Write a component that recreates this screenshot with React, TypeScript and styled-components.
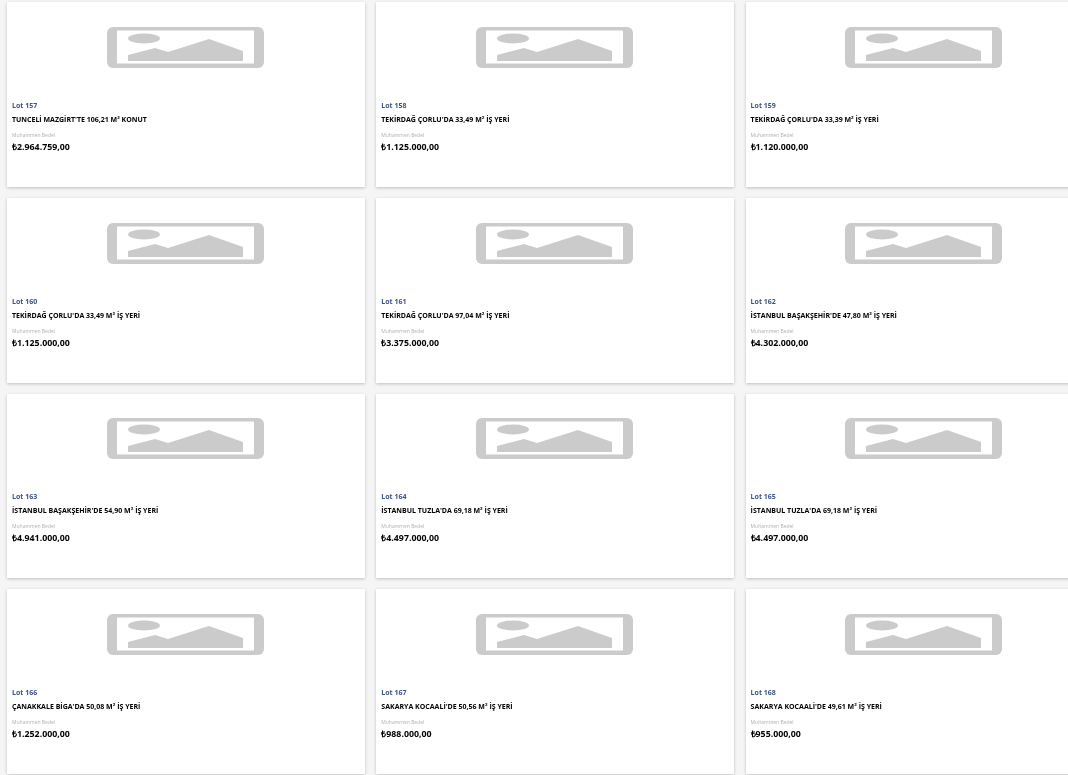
import React from "react";
import styled, { createGlobalStyle } from "styled-components";

const Global = createGlobalStyle`
  html, body { margin: 0; padding: 0; height: 775px; overflow: hidden; background: #f5f5f5; }
  body { font-family: "Open Sans", "Liberation Sans", sans-serif; }
`;

const Frame = styled.div`
  width: 1068px;
  height: 775px;
  overflow: hidden;
`;

const Grid = styled.main`
  display: grid;
  grid-template-columns: repeat(3, 357.5px);
  grid-auto-rows: 184.5px;
  column-gap: 11.8px;
  row-gap: 11.2px;
  padding: 2.4px 0 0 7px;
  width: 1200px;
`;

const Card = styled.article`
  display: flex;
  flex-direction: column;
  background: #fff;
  box-shadow: 0 1px 3px rgba(0, 0, 0, 0.22);
  padding: 0 5px;
`;

const Thumb = styled.svg`
  display: block;
  flex: none;
  width: 159px;
  height: 43px;
  margin: 23.5px 0 0 93.8px;
  filter: blur(0.7px);
`;

const Body = styled.div`
  filter: blur(0.25px);
`;

const Lot = styled.div`
  margin-top: 32px;
  font-size: 7px;
  line-height: 10px;
  font-weight: 700;
  color: #3d5288;
`;

const Title = styled.h3`
  margin: 4px 0 0;
  font-size: 7px;
  line-height: 10px;
  font-weight: 700;
  color: #000;
  white-space: nowrap;
`;

const Label = styled.div`
  margin-top: 6px;
  font-size: 5px;
  line-height: 8px;
  color: #b0b0b0;
`;

const Price = styled.div`
  margin-top: 2px;
  font-size: 8.8px;
  line-height: 12px;
  font-weight: 700;
  color: #000;
`;

const lots: [number, string, string][] = [
  [157, "TUNCELİ MAZGİRT'TE 106,21 M² KONUT", "₺2.964.759,00"],
  [158, "TEKİRDAĞ ÇORLU'DA 33,49 M² İŞ YERİ", "₺1.125.000,00"],
  [159, "TEKİRDAĞ ÇORLU'DA 33,39 M² İŞ YERİ", "₺1.120.000,00"],
  [160, "TEKİRDAĞ ÇORLU'DA 33,49 M² İŞ YERİ", "₺1.125.000,00"],
  [161, "TEKİRDAĞ ÇORLU'DA 97,04 M² İŞ YERİ", "₺3.375.000,00"],
  [162, "İSTANBUL BAŞAKŞEHİR'DE 47,80 M² İŞ YERİ", "₺4.302.000,00"],
  [163, "İSTANBUL BAŞAKŞEHİR'DE 54,90 M² İŞ YERİ", "₺4.941.000,00"],
  [164, "İSTANBUL TUZLA'DA 69,18 M² İŞ YERİ", "₺4.497.000,00"],
  [165, "İSTANBUL TUZLA'DA 69,18 M² İŞ YERİ", "₺4.497.000,00"],
  [166, "ÇANAKKALE BİGA'DA 50,08 M² İŞ YERİ", "₺1.252.000,00"],
  [167, "SAKARYA KOCAALİ'DE 50,56 M² İŞ YERİ", "₺988.000,00"],
  [168, "SAKARYA KOCAALİ'DE 49,61 M² İŞ YERİ", "₺955.000,00"],
];

const Placeholder = () => (
  <Thumb viewBox="0 0 159 43" aria-hidden="true">
    <rect x="1" y="1" width="157" height="41" rx="6" fill="#cbcbcb" />
    <rect x="11" y="4.5" width="137" height="33" fill="#fff" />
    <ellipse cx="38" cy="12.5" rx="16" ry="5" fill="#cbcbcb" />
    <path d="M22 29 L49 22 L62 26 L103 13 L137 25 L137 35 L22 35 Z" fill="#cbcbcb" />
  </Thumb>
);

export default function App() {
  return (
    <Frame>
      <Global />
      <Grid>
        {lots.map(([no, title, price]) => (
          <Card key={no}>
            <Placeholder />
            <Body>
              <Lot>Lot {no}</Lot>
              <Title>{title}</Title>
              <Label>Muhammen Bedel</Label>
              <Price>{price}</Price>
            </Body>
          </Card>
        ))}
      </Grid>
    </Frame>
  );
}
